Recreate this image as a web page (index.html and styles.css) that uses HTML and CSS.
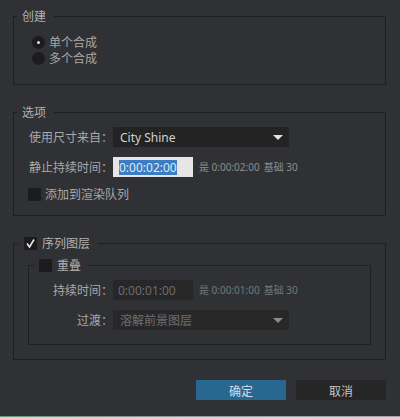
FILE: index.html
```html
<!DOCTYPE html>
<html lang="zh-CN">
<head>
    <meta charset="UTF-8">
    <meta name="viewport" content="width=device-width, initial-scale=1.0">
    <title>新建合成</title>
    <link rel="stylesheet" href="styles.css">
</head>
<body>
    <fieldset class="group group-create">
        <legend class="group-title">创建</legend>
        <div class="radio-row">
            <span class="radio checked"></span>
            <span>单个合成</span>
        </div>
        <div class="radio-row">
            <span class="radio"></span>
            <span>多个合成</span>
        </div>
    </fieldset>

    <fieldset class="group group-options">
        <legend class="group-title">选项</legend>
        <div class="field">
            <span class="label">使用尺寸来自：</span>
            <div class="select">
                <span>City Shine</span>
                <span class="arrow"></span>
            </div>
        </div>
        <div class="field">
            <span class="label">静止持续时间：</span>
            <div class="timecode active"><span class="selected">0:00:02:00</span></div>
            <span class="hint">是 0:00:02:00</span>
            <span class="hint">基础 30</span>
        </div>
        <div class="check-row">
            <span class="checkbox"></span>
            <span>添加到渲染队列</span>
        </div>
    </fieldset>

    <fieldset class="group group-sequence">
        <legend class="group-title check-title">
            <span class="checkbox">
                <svg width="13" height="13" viewBox="0 0 13 13"><polyline points="3,6.5 5.5,10 10,2.5" fill="none" stroke="#e6e6e6" stroke-width="1.6"/></svg>
            </span>
            <span>序列图层</span>
        </legend>

        <fieldset class="group group-overlap">
            <legend class="group-title check-title">
                <span class="checkbox"></span>
                <span>重叠</span>
            </legend>
            <div class="field">
                <span class="label">持续时间：</span>
                <div class="timecode disabled">0:00:01:00</div>
                <span class="hint dim">是 0:00:01:00</span>
                <span class="hint dim">基础 30</span>
            </div>
            <div class="field">
                <span class="label">过渡：</span>
                <div class="select disabled">
                    <span>溶解前景图层</span>
                    <span class="arrow"></span>
                </div>
            </div>
        </fieldset>
    </fieldset>

    <div class="buttons">
        <button class="btn primary">确定</button>
        <button class="btn">取消</button>
    </div>

    <div class="edge"></div>
</body>
</html>
```

FILE: styles.css
```css
html, body {
    height: 100%;
}

body {
    margin: 0;
    padding: 9px 14px 0 13px;
    box-sizing: border-box;
    display: flex;
    flex-direction: column;
    background: #303134;
    color: #a9a9a9;
    font-family: "Noto Sans", "Noto Sans CJK SC", sans-serif;
    font-size: 12px;
    line-height: 15px;
}

.group {
    margin: 0;
    padding: 0;
    border: 1px solid #1e1f20;
    min-width: 0;
}

.group-title {
    margin-left: 3px;
    padding: 0 8px 0 5px;
    line-height: 15px;
    height: 15px;
    color: #b0b0b0;
}

.check-title {
    display: flex;
    align-items: center;
    gap: 5px;
    margin-left: 5px;
    padding: 0 8px 0 5px;
}

.group-create {
    padding: 10px 0 18px 0;
}

.group-create .radio-row {
    padding-left: 18px;
}

.group-options {
    margin-top: 20px;
    padding: 7px 0 14px 0;
}

.group-sequence {
    margin-top: 20px;
    padding: 7px 0 14px 0;
}

.group-overlap {
    margin: 0 14px;
    padding: 7px 0 14px 0;
}

.radio-row {
    display: flex;
    align-items: center;
    gap: 4px;
    height: 16px;
}

.radio {
    width: 13px;
    height: 13px;
    border-radius: 50%;
    background: #1c1c1d;
    position: relative;
}

.radio.checked::after {
    content: "";
    position: absolute;
    left: 5px;
    top: 5px;
    width: 3px;
    height: 3px;
    border-radius: 50%;
    background: #e0e0e0;
}

.field {
    display: flex;
    align-items: center;
    height: 20px;
    margin-bottom: 10px;
}

.group-options .field {
    padding-left: 15px;
}

.group-overlap .field:last-child {
    margin-bottom: 0;
}

.label {
    width: 84px;
    text-align: right;
    white-space: nowrap;
}

.select {
    width: 176px;
    height: 20px;
    box-sizing: border-box;
    padding: 0 5px 0 7px;
    display: flex;
    align-items: center;
    justify-content: space-between;
    background: #232323;
    color: #d2d2d2;
}

.select.disabled {
    background: #282828;
    color: #6f6f6f;
}

.arrow {
    width: 0;
    height: 0;
    border-left: 5px solid transparent;
    border-right: 5px solid transparent;
    border-top: 5px solid #e2e2e2;
    margin-right: 1px;
}

.select.disabled .arrow {
    border-top-color: #8a8a8a;
}

.timecode {
    width: 80px;
    height: 20px;
    box-sizing: border-box;
    padding-left: 6px;
    display: flex;
    align-items: center;
    font-size: 12px;
}

.timecode.active {
    background: #e6e6e6;
}

.timecode .selected {
    background: #3b7cc4;
    color: #dfe9f5;
}

.timecode.disabled {
    background: #272727;
    color: #6c6c6c;
    padding-left: 5px;
}

.hint {
    font-size: 10px;
    color: #8e8e8e;
    margin-left: 6px;
    white-space: nowrap;
}

.hint + .hint {
    margin-left: 4px;
}

.hint.dim {
    color: #777777;
}

.check-row {
    display: flex;
    align-items: center;
    gap: 4px;
    height: 14px;
    padding-left: 14px;
}

.checkbox {
    width: 13px;
    height: 13px;
    flex: none;
    background: #1c1c1d;
    display: flex;
}

.buttons {
    margin-top: 20px;
    display: flex;
    justify-content: flex-end;
    gap: 10px;
}

.btn {
    width: 90px;
    height: 20px;
    padding: 0;
    border: none;
    background: #262626;
    color: #c4c4c4;
    font-family: "Noto Sans CJK SC", sans-serif;
    font-size: 12px;
}

.btn.primary {
    background: #286890;
    color: #d6dde4;
}

.edge {
    margin: auto -14px 0 -13px;
    height: 1px;
    background: linear-gradient(to right, #6e9286, #8fa3a3 60%, #a0a6b0);
}
```
